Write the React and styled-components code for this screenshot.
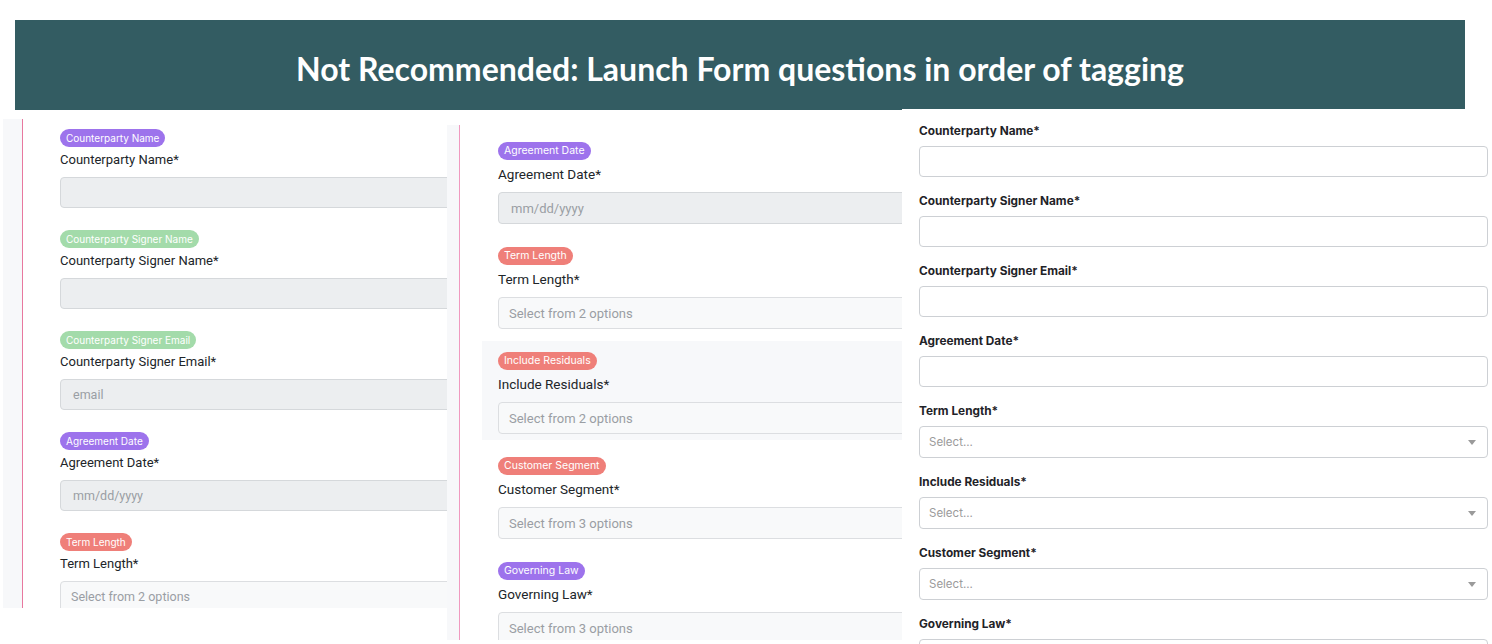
import React from 'react';
import styled, { createGlobalStyle } from 'styled-components';

const GlobalStyle = createGlobalStyle`
  html, body {
    margin: 0;
    padding: 0;
    background: #fff;
  }
  body {
    width: 1492px;
    height: 644px;
    overflow: hidden;
    font-family: Inter, 'Noto Sans', sans-serif;
  }
`;

const TAG_COLORS = {
  purple: '#9d73ec',
  green: '#a3dbaa',
  red: '#ef7f79',
};

const Canvas = styled.div`
  position: relative;
  width: 1492px;
  height: 644px;
  padding-top: 20px;
  box-sizing: border-box;
  overflow: hidden;
  background: #fff;
`;

const Banner = styled.header`
  margin: 0 27px 0 15px;
  height: 90px;
  padding-top: 6px;
  box-sizing: border-box;
  display: flex;
  align-items: center;
  justify-content: center;
  background: #335c62;
  color: #fff;
  font-family: Lato, 'Open Sans', sans-serif;
  font-weight: 700;
  font-size: 32px;
`;

/* each screenshot clip sits on the canvas where it was pasted */
const Shot = styled.section`
  position: absolute;
  left: ${({ $x }) => $x}px;
  top: ${({ $y }) => $y}px;
  width: ${({ $w }) => $w}px;
  height: ${({ $h }) => $h}px;
  display: flex;
  overflow: hidden;
  background: #fff;
`;

const Gutter = styled.div`
  flex: none;
  width: ${({ $w }) => $w}px;
  background: #f7f8fa;
  border-right: 1.5px solid ${({ $line }) => $line};
`;

const FormColumn = styled.div`
  flex: 1;
  min-width: 0;
  display: flex;
  flex-direction: column;
  padding: ${({ $pad }) => $pad};
`;

const Group = styled.div`
  display: flex;
  flex-direction: column;
  align-items: flex-start;
  padding: ${({ $pad }) => $pad};
  margin-bottom: ${({ $mb }) => $mb || 0}px;
  background: ${({ $shaded }) => ($shaded ? '#f7f8fa' : 'transparent')};
`;

const Tag = styled.span`
  display: flex;
  align-items: center;
  height: 18px;
  padding: 0 6px;
  border-radius: 9px;
  background: ${({ $color }) => TAG_COLORS[$color]};
  color: #fff;
  font-size: ${({ $fs }) => $fs}px;
  line-height: 1;
  white-space: nowrap;
`;

const Label = styled.div`
  margin-top: ${({ $mt }) => $mt}px;
  font-family: Roboto, Inter, sans-serif;
  font-size: ${({ $fs }) => $fs}px;
  line-height: 20px;
  color: #212529;
  white-space: nowrap;
`;

const Field = styled.div`
  margin-top: ${({ $mt }) => $mt}px;
  width: calc(100% + 30px);
  height: ${({ $h }) => $h}px;
  box-sizing: border-box;
  display: flex;
  align-items: center;
  padding-left: ${({ $select }) => ($select ? 10 : 12)}px;
  border: 1px solid ${({ $select }) => ($select ? '#dcdee1' : '#d5d8db')};
  border-radius: 4px;
  background: ${({ $select }) => ($select ? '#f8f9fa' : '#eceef0')};
  color: #9a9ea4;
  font-family: Roboto, Inter, sans-serif;
  font-size: ${({ $fs }) => $fs}px;
  white-space: nowrap;
`;

const RightShot = styled(Shot)`
  display: block;
  padding: 14px 4px 0 17px;
  box-sizing: border-box;
`;

const PlainLabel = styled.div`
  font-size: 11.8px;
  font-weight: 700;
  line-height: 16px;
  color: #1f2328;
  white-space: nowrap;
`;

const PlainField = styled.div`
  margin: 7px 0 16px;
  height: ${({ $select }) => ($select ? 32 : 31)}px;
  box-sizing: border-box;
  display: flex;
  align-items: center;
  justify-content: space-between;
  padding: 0 11px 0 9px;
  border: 1px solid #cdd0d4;
  border-radius: 4px;
  background: #fff;
  color: #9b9b9b;
  font-size: 11.5px;
`;

const Caret = styled.span`
  width: 0;
  height: 0;
  border-left: 4.5px solid transparent;
  border-right: 4.5px solid transparent;
  border-top: 5px solid #9a9a9a;
`;

const leftFields = [
  { tag: 'Counterparty Name', color: 'purple', label: 'Counterparty Name*' },
  { tag: 'Counterparty Signer Name', color: 'green', label: 'Counterparty Signer Name*' },
  { tag: 'Counterparty Signer Email', color: 'green', label: 'Counterparty Signer Email*', hint: 'email' },
  { tag: 'Agreement Date', color: 'purple', label: 'Agreement Date*', hint: 'mm/dd/yyyy' },
  { tag: 'Term Length', color: 'red', label: 'Term Length*', hint: 'Select from 2 options', select: true },
];

const middleFields = [
  { tag: 'Agreement Date', color: 'purple', label: 'Agreement Date*', hint: 'mm/dd/yyyy' },
  { tag: 'Term Length', color: 'red', label: 'Term Length*', hint: 'Select from 2 options', select: true },
  { tag: 'Include Residuals', color: 'red', label: 'Include Residuals*', hint: 'Select from 2 options', select: true, shaded: true },
  { tag: 'Customer Segment', color: 'red', label: 'Customer Segment*', hint: 'Select from 3 options', select: true },
  { tag: 'Governing Law', color: 'purple', label: 'Governing Law*', hint: 'Select from 3 options', select: true },
];

const rightFields = [
  { label: 'Counterparty Name*' },
  { label: 'Counterparty Signer Name*' },
  { label: 'Counterparty Signer Email*' },
  { label: 'Agreement Date*' },
  { label: 'Term Length*', select: true },
  { label: 'Include Residuals*', select: true },
  { label: 'Customer Segment*', select: true },
  { label: 'Governing Law*', select: true },
];

const TaggedField = ({ field, pad, mb, labelGap, fieldGap, height, tagSize, textSize }) => (
  <Group $pad={pad} $mb={mb} $shaded={field.shaded}>
    <Tag $color={field.color} $fs={tagSize}>{field.tag}</Tag>
    <Label $mt={labelGap} $fs={textSize}>{field.label}</Label>
    <Field $mt={fieldGap} $h={height} $select={field.select} $fs={textSize - 0.5}>
      {field.hint}
    </Field>
  </Group>
);

const App = () => (
  <>
    <GlobalStyle />
    <Canvas>
      <Banner>Not Recommended: Launch Form questions in order of tagging</Banner>

      <Shot $x={3} $y={119} $w={444} $h={489}>
        <Gutter $w={19} $line="#e8789f" />
        <FormColumn $pad="10px 0 0 37px">
          {leftFields.map(f => (
            <TaggedField
              key={f.label}
              field={f}
              pad="0 0 22px"
              labelGap={3}
              fieldGap={7}
              height={31}
              tagSize={10}
              textSize={13}
            />
          ))}
        </FormColumn>
      </Shot>

      <Shot $x={447} $y={125} $w={456} $h={515}>
        <Gutter $w={12} $line="#f09ac0" />
        <FormColumn $pad="6px 0 0 22px">
          {middleFields.map(f => (
            <TaggedField
              key={f.label}
              field={f}
              pad={f.shaded ? '11px 0 6px 16px' : '11px 0 12px 16px'}
              mb={f.shaded ? 6 : 0}
              labelGap={4}
              fieldGap={8}
              height={32}
              tagSize={10.5}
              textSize={13.5}
            />
          ))}
        </FormColumn>
      </Shot>

      <RightShot $x={902} $y={109} $w={590} $h={535}>
        {rightFields.map(f => (
          <div key={f.label}>
            <PlainLabel>{f.label}</PlainLabel>
            <PlainField $select={f.select}>
              {f.select && (
                <>
                  <span>Select...</span>
                  <Caret />
                </>
              )}
            </PlainField>
          </div>
        ))}
      </RightShot>
    </Canvas>
  </>
);

export default App;
